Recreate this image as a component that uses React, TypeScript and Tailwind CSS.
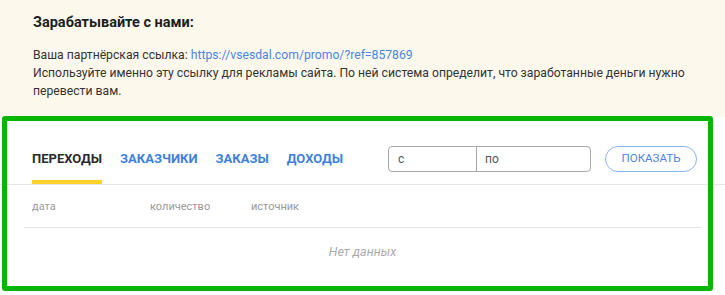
const tabs = ['Переходы', 'Заказчики', 'Заказы', 'Доходы'];

const App = () => {
    return (
        <div className="relative w-[725px] h-[295px] overflow-hidden bg-white font-['Roboto',sans-serif]">
            <section className="h-[117px] bg-[#fdf8ec] pl-[33px] pr-[20px] pt-[13px]">
                <h2 className="text-[14.5px] font-bold text-[#1e1e1e] leading-[20px]">
                    Зарабатывайте с нами:
                </h2>
                <div className="mt-[13px] text-[12.2px] leading-[18px] text-[#333]">
                    <p>
                        Ваша партнёрская ссылка:{' '}
                        <a className="text-[#4a86e0]">https://vsesdal.com/promo/?ref=857869</a>
                    </p>
                    <p>
                        Используйте именно эту ссылку для рекламы сайта. По ней система определит, что заработанные деньги нужно перевести вам.
                    </p>
                </div>
            </section>

            <div className="flex items-end h-[68px] border-b border-[#e6e6e6] pl-[32px] pr-[28px]">
                <nav className="flex gap-[18px]">
                    {tabs.map((tab, i) => (
                        <div
                            key={tab}
                            className={
                                i === 0
                                    ? 'pb-[12px] border-b-4 border-[#ffd02b] text-[13px] font-bold uppercase text-[#2b2b2b]'
                                    : 'pb-[12px] border-b-4 border-transparent text-[13px] font-bold uppercase text-[#3f7fdc]'
                            }
                        >
                            {tab}
                        </div>
                    ))}
                </nav>
                <div className="ml-auto flex items-center gap-[14px] pb-[12px]">
                    <div className="flex h-[26px] w-[203px] rounded-[4px] border border-[#a8a8a8] text-[12px] text-[#555]">
                        <div className="w-[88px] border-r border-[#a8a8a8] pl-[9px] leading-[24px]">с</div>
                        <div className="flex-1 pl-[8px] leading-[24px]">по</div>
                    </div>
                    <button className="h-[26px] w-[92px] rounded-full border border-[#8ab4f0] text-[11.5px] uppercase text-[#4a86e0]">
                        Показать
                    </button>
                </div>
            </div>

            <div className="mx-[24px]">
                <div className="flex h-[43px] items-center border-b border-[#e6e6e6] pl-[8px] pt-[2px] text-[11px] text-[#999]">
                    <div className="w-[118px]">дата</div>
                    <div className="w-[101px]">количество</div>
                    <div>источник</div>
                </div>
                <div className="h-[48px] flex items-center justify-center text-[12.5px] italic text-[#aaa]">
                    Нет данных
                </div>
            </div>

            {/* green annotation frame */}
            <div className="absolute left-[2px] top-[116px] w-[711px] h-[175px] rounded-[3px] border-[5px] border-[#07b507] pointer-events-none" />
        </div>
    );
};

export default App;
